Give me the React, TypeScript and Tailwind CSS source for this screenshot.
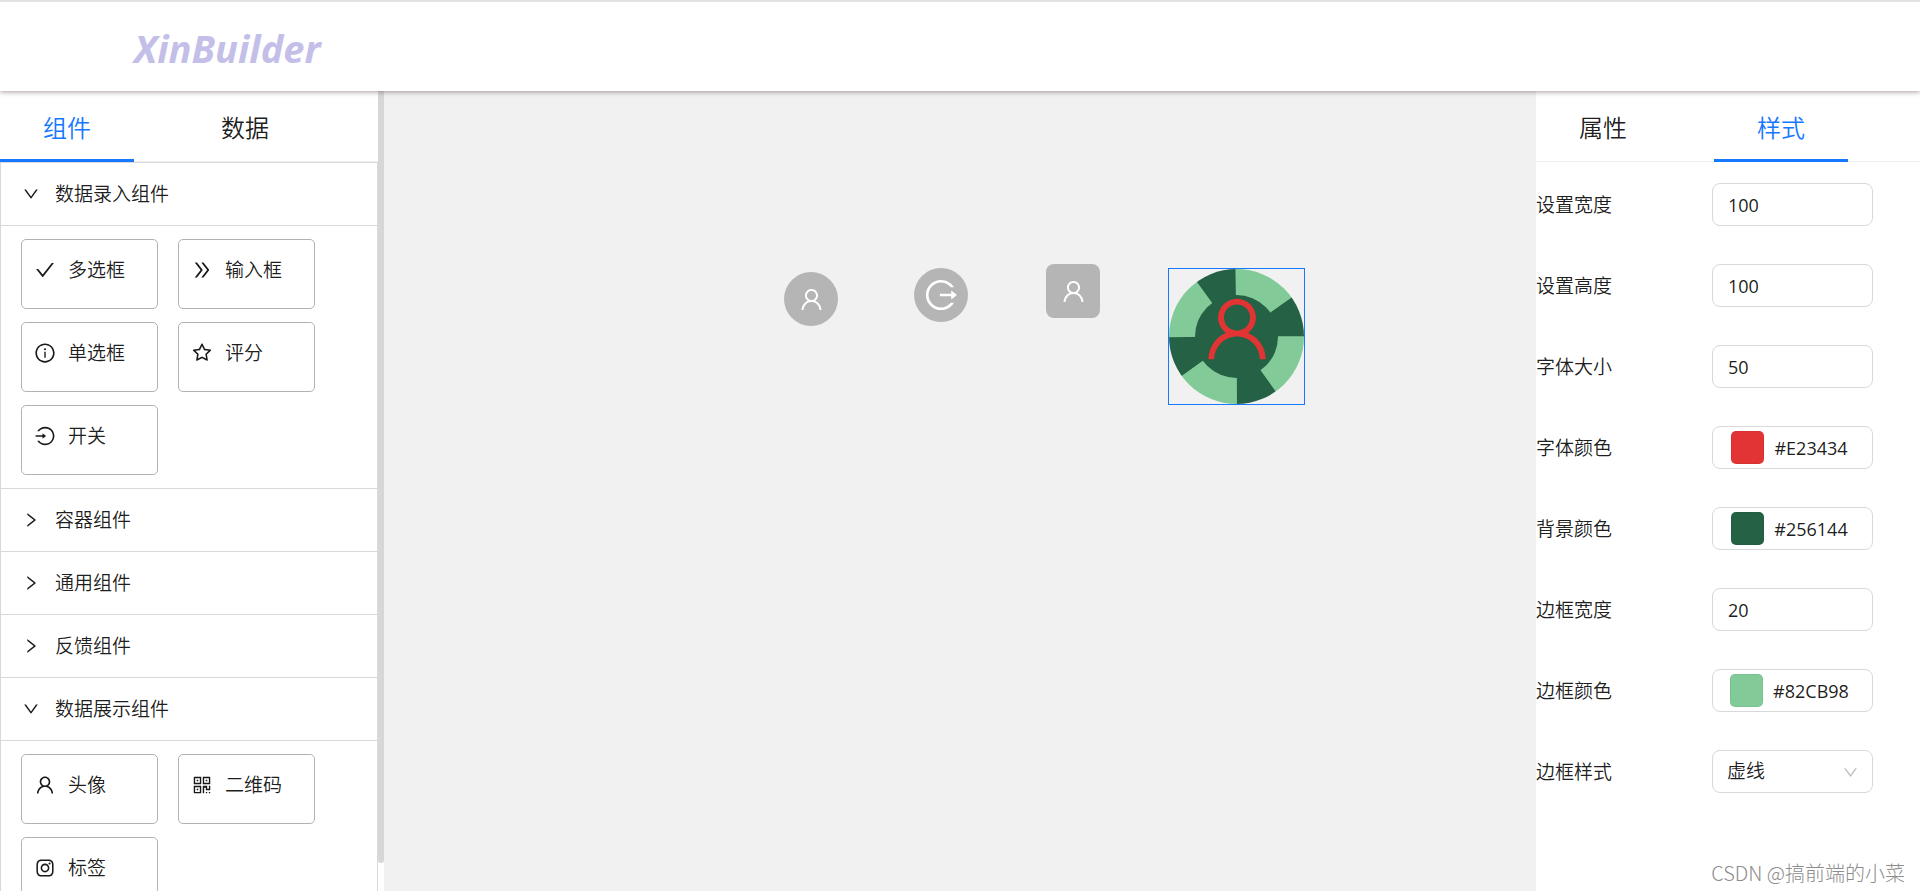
import { useState } from "react";
import type { IconType } from "react-icons";
import {
  AiOutlineCheck,
  AiOutlineDoubleRight,
  AiOutlineDown,
  AiOutlineInfoCircle,
  AiOutlineInstagram,
  AiOutlineLogin,
  AiOutlineLogout,
  AiOutlineQrcode,
  AiOutlineRight,
  AiOutlineStar,
  AiOutlineUser,
} from "react-icons/ai";

type Item = { label: string; icon: IconType };
type Group = { title: string; items: Item[] };

const groups: Group[] = [
  {
    title: "数据录入组件",
    items: [
      { label: "多选框", icon: AiOutlineCheck },
      { label: "输入框", icon: AiOutlineDoubleRight },
      { label: "单选框", icon: AiOutlineInfoCircle },
      { label: "评分", icon: AiOutlineStar },
      { label: "开关", icon: AiOutlineLogin },
    ],
  },
  { title: "容器组件", items: [] },
  { title: "通用组件", items: [] },
  { title: "反馈组件", items: [] },
  {
    title: "数据展示组件",
    items: [
      { label: "头像", icon: AiOutlineUser },
      { label: "二维码", icon: AiOutlineQrcode },
      { label: "标签", icon: AiOutlineInstagram },
    ],
  },
];

function Tabs({ names, initial }: { names: string[]; initial: number }) {
  const [active, setActive] = useState(initial);
  return (
    <div role="tablist" className="flex h-[71px] shrink-0 gap-11 border-b border-[#f0f0f0]">
      {names.map((name, i) => (
        <button
          key={name}
          type="button"
          role="tab"
          aria-selected={active === i}
          onClick={() => setActive(i)}
          className={
            "-mb-px border-b-[3px] px-[43px] pt-1.5 text-2xl " +
            (active === i ? "border-[#1677ff] text-[#1677ff]" : "border-transparent")
          }
        >
          {name}
        </button>
      ))}
    </div>
  );
}

function Section({ group }: { group: Group }) {
  const [open, setOpen] = useState(group.items.length > 0);
  const Arrow = open ? AiOutlineDown : AiOutlineRight;
  return (
    <section className="border-b border-[#d9d9d9]">
      <button
        type="button"
        aria-expanded={open}
        onClick={() => setOpen(!open)}
        className="flex h-[62px] w-full items-center gap-[15px] pl-[21px] text-left"
      >
        <Arrow className="size-[18px]" />
        {group.title}
      </button>
      {open && group.items.length > 0 && (
        <div className="flex flex-wrap gap-x-5 gap-y-[13px] border-t border-[#d9d9d9] py-[13px] pl-5">
          {group.items.map(({ label, icon: Icon }) => (
            <button
              key={label}
              type="button"
              className="flex h-[70px] w-[137px] items-start rounded-[5px] border border-[#b5b1b1] pt-4 pl-3"
            >
              <span className="flex items-center gap-3 leading-7">
                <Icon className="size-[22px]" />
                {label}
              </span>
            </button>
          ))}
        </div>
      )}
    </section>
  );
}

const control = "h-[43px] w-[161px] rounded-lg border border-[#d9d9d9] bg-white";

function Field({ id, label, children }: { id: string; label: string; children: React.ReactNode }) {
  return (
    <div className="flex items-center">
      <label htmlFor={id} className="w-44 shrink-0 pt-0.5">
        {label}
      </label>
      {children}
    </div>
  );
}

function TextField({ id, label, value }: { id: string; label: string; value: string }) {
  return (
    <Field id={id} label={label}>
      <input id={id} type="text" defaultValue={value} className={control + " px-[15px] text-lg font-normal"} />
    </Field>
  );
}

function ColorField({ id, label, value }: { id: string; label: string; value: string }) {
  return (
    <Field id={id} label={label}>
      <button
        id={id}
        type="button"
        className={control + " flex items-center justify-center gap-2.5 pr-1.5 text-lg font-normal"}
      >
        <span className="size-[33px] rounded-[5px] border border-black/5" style={{ backgroundColor: value }} />
        {value}
      </button>
    </Field>
  );
}

const avatar = "absolute flex size-[54px] items-center justify-center bg-[#b5b5b5] text-white";

export default function App() {
  return (
    <div className="flex h-screen flex-col overflow-hidden bg-white font-['Open_Sans','Noto_Sans_CJK_SC',sans-serif] text-[19px] font-[350] text-black/90">
      <header className="z-10 flex h-[91px] shrink-0 items-center border-t-2 border-[#e2e2e2] bg-white pt-1 pl-[134px] shadow-[0_1px_5px_rgba(80,60,60,0.5)]">
        <h1 className="font-['Noto_Sans',sans-serif] text-[38px] font-bold text-[#c3bfe8] italic">XinBuilder</h1>
      </header>

      <div className="flex min-h-0 flex-1">
        <aside className="flex w-1/5 shrink-0">
          <div className="flex min-w-0 flex-1 flex-col overflow-hidden">
            <Tabs names={["组件", "数据"]} initial={0} />
            <div className="min-h-0 flex-1 overflow-hidden border-x border-t border-[#d9d9d9]">
              {groups.map((group) => (
                <Section key={group.title} group={group} />
              ))}
            </div>
          </div>
          <div className="w-1.5">
            <div className="h-[96.5%] rounded-b-full bg-[#d9d6d6]" />
          </div>
        </aside>

        <main className="relative min-w-0 flex-1 bg-[#f1f1f1]">
          <div className={avatar + " top-[181px] left-[400px] rounded-full"}>
            <AiOutlineUser className="size-[27px]" />
          </div>
          <div className={avatar + " top-[177px] left-[530px] rounded-full"}>
            <AiOutlineLogout className="size-9" />
          </div>
          <div className={avatar + " top-[173px] left-[662px] rounded-lg"}>
            <AiOutlineUser className="size-[27px]" />
          </div>
          <div className="absolute top-[177px] left-[784px] border border-[#1677ff]">
            <div className="flex size-[135px] items-center justify-center rounded-full border-[26px] border-dashed border-[#82CB98] bg-[#256144] text-[#E23434]">
              <AiOutlineUser className="mb-4 size-[78px] shrink-0" />
            </div>
          </div>
        </main>

        <aside className="relative flex w-1/5 shrink-0 flex-col bg-white">
          <Tabs names={["属性", "样式"]} initial={1} />
          <form className="flex flex-col gap-[38px] pt-[21px]">
            <TextField id="width" label="设置宽度" value="100" />
            <TextField id="height" label="设置高度" value="100" />
            <TextField id="font-size" label="字体大小" value="50" />
            <ColorField id="color" label="字体颜色" value="#E23434" />
            <ColorField id="background" label="背景颜色" value="#256144" />
            <TextField id="border-width" label="边框宽度" value="20" />
            <ColorField id="border-color" label="边框颜色" value="#82CB98" />
            <Field id="border-style" label="边框样式">
              <div className="relative">
                <select id="border-style" defaultValue="dashed" className={control + " appearance-none px-3.5"}>
                  <option value="dashed">虚线</option>
                  <option value="solid">实线</option>
                </select>
                <AiOutlineDown className="pointer-events-none absolute top-3.5 right-3.5 size-[17px] text-black/25" />
              </div>
            </Field>
          </form>
          <p className="absolute right-[15px] bottom-1 font-['Noto_Sans_CJK_SC',sans-serif] text-xl font-light text-[#8c8c8c]">
            CSDN @搞前端的小菜
          </p>
        </aside>
      </div>
    </div>
  );
}
